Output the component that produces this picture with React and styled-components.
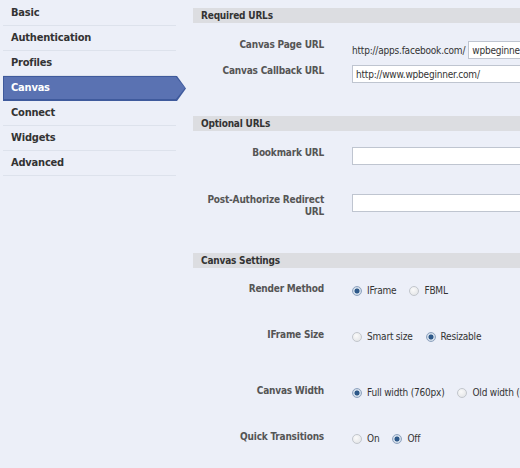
import React from 'react'
import styled, { createGlobalStyle } from 'styled-components'

const Global = createGlobalStyle`
  html, body {
    margin: 0;
    padding: 0;
    background: #eceff8;
    overflow: hidden;
  }
  body {
    font-family: "DejaVu Sans Condensed", "Liberation Sans", sans-serif;
    font-size: 10px;
    letter-spacing: -0.2px;
    color: #333;
  }
`

const Page = styled.div`
  display: flex;
  width: 520px;
  height: 468px;
  overflow: hidden;
`

const Sidebar = styled.nav`
  flex: 0 0 173px;
  width: 173px;
  min-width: 0;
  margin-left: 3px;
  margin-right: 17px;
  padding-top: 1px;
`

const NavItem = styled.div`
  position: relative;
  box-sizing: border-box;
  height: 25px;
  line-height: 24px;
  padding-left: 8px;
  font-weight: bold;
  font-size: 11px;
  color: ${p => (p.$active ? '#fff' : '#333')};
  border-bottom: 1px solid ${p => (p.$active ? 'transparent' : '#dde2ec')};
  width: ${p => (p.$active ? '183px' : '100%')};
  background: ${p => (p.$active ? '#3f5a9c' : 'transparent')};
  clip-path: ${p =>
    p.$active
      ? 'polygon(0 0, calc(100% - 9px) 0, 100% 50%, calc(100% - 9px) 100%, 0 100%)'
      : 'none'};

  &::before {
    content: '';
    display: ${p => (p.$active ? 'block' : 'none')};
    position: absolute;
    inset: 1px;
    background: #5a72b2;
    clip-path: polygon(0 0, calc(100% - 9px) 0, 100% 50%, calc(100% - 9px) 100%, 0 100%);
  }

  span {
    position: relative;
  }
`

const Main = styled.main`
  flex: 0 0 327px;
  width: 327px;
  min-width: 0;
  padding-top: 8px;
`

const SectionBar = styled.div`
  height: 15px;
  line-height: 15px;
  background: #dcdde1;
  padding-left: 8px;
  font-weight: bold;
  color: #333;
  margin-top: ${p => p.$gap || 0}px;
`

const Row = styled.div`
  display: flex;
  align-items: flex-start;
  margin-top: ${p => p.$gap}px;
`

const Label = styled.div`
  flex: 0 0 131px;
  text-align: right;
  line-height: 12px;
  font-weight: bold;
  color: #555;
  margin-right: 28px;
`

const Field = styled.div`
  display: flex;
  align-items: center;
  margin-top: ${p => p.$offset || 0}px;
  white-space: nowrap;
`

const Prefix = styled.span`
  color: #333;
  margin-right: 3px;
`

const TextInput = styled.input`
  box-sizing: border-box;
  flex: 0 0 auto;
  width: ${p => p.$width}px;
  height: 18px;
  border: 1px solid #bfc5d0;
  background: #fff;
  padding: 0 3px;
  font: inherit;
  letter-spacing: inherit;
  color: #333;
  outline: none;
`

const RadioGroup = styled.div`
  display: flex;
  align-items: center;
  gap: 13px;
  margin-top: 2px;
  white-space: nowrap;
  line-height: 12px;
`

const RadioOption = styled.label`
  display: flex;
  align-items: center;
  gap: 5px;
  color: #333;
`

const RadioDot = styled.span`
  box-sizing: border-box;
  flex: 0 0 10px;
  width: 10px;
  height: 10px;
  border-radius: 50%;
  border: 1px solid ${p => (p.$checked ? '#8fa3bf' : '#c2c6cc')};
  background: ${p =>
    p.$checked
      ? 'radial-gradient(circle, #2d5889 0 2.2px, #cfdbe8 2.8px 100%)'
      : 'radial-gradient(circle at 40% 35%, #fafafa, #dfe1e4)'};
`

const navItems = ['Basic', 'Authentication', 'Profiles', 'Canvas', 'Connect', 'Widgets', 'Advanced']

function Radios({ options, checked }) {
  return (
    <RadioGroup>
      {options.map(o => (
        <RadioOption key={o}>
          <RadioDot $checked={o === checked} />
          {o}
        </RadioOption>
      ))}
    </RadioGroup>
  )
}

export default function App() {
  return (
    <>
      <Global />
      <Page>
        <Sidebar>
          {navItems.map(n => (
            <NavItem key={n} $active={n === 'Canvas'}>
              <span>{n}</span>
            </NavItem>
          ))}
        </Sidebar>
        <Main>
          <SectionBar>Required URLs</SectionBar>
          <Row $gap={16}>
            <Label>Canvas Page URL</Label>
            <Field $offset={2}>
              <Prefix>http://apps.facebook.com/</Prefix>
              <TextInput $width={120} defaultValue="wpbeginner" />
            </Field>
          </Row>
          <Row $gap={6}>
            <Label>Canvas Callback URL</Label>
            <Field>
              <TextInput $width={240} defaultValue="http://www.wpbeginner.com/" />
            </Field>
          </Row>

          <SectionBar $gap={33}>Optional URLs</SectionBar>
          <Row $gap={16}>
            <Label>Bookmark URL</Label>
            <Field>
              <TextInput $width={240} defaultValue="" />
            </Field>
          </Row>
          <Row $gap={29}>
            <Label>Post-Authorize Redirect URL</Label>
            <Field>
              <TextInput $width={240} defaultValue="" />
            </Field>
          </Row>

          <SectionBar $gap={35}>Canvas Settings</SectionBar>
          <Row $gap={15}>
            <Label>Render Method</Label>
            <Radios options={['IFrame', 'FBML']} checked="IFrame" />
          </Row>
          <Row $gap={32}>
            <Label>IFrame Size</Label>
            <Radios options={['Smart size', 'Resizable']} checked="Resizable" />
          </Row>
          <Row $gap={42}>
            <Label>Canvas Width</Label>
            <Radios options={['Full width (760px)', 'Old width (646px)']} checked="Full width (760px)" />
          </Row>
          <Row $gap={32}>
            <Label>Quick Transitions</Label>
            <Radios options={['On', 'Off']} checked="Off" />
          </Row>
        </Main>
      </Page>
    </>
  )
}
